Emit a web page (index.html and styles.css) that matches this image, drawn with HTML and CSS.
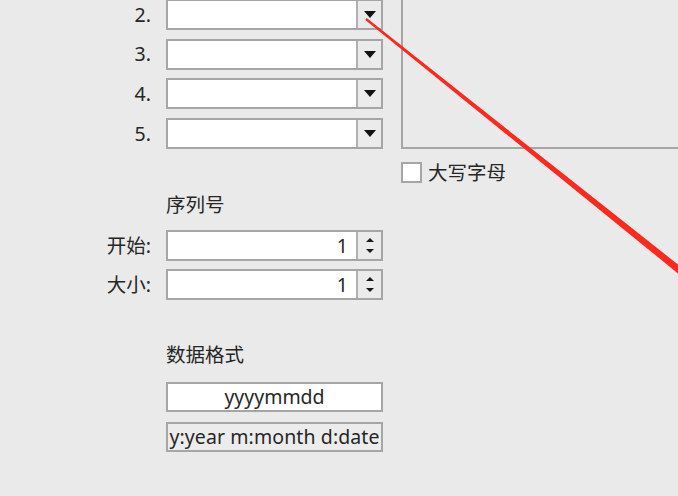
FILE: index.html
```html
<!DOCTYPE html>
<html lang="zh">
<head>
<meta charset="utf-8">
<link rel="stylesheet" href="styles.css">
</head>
<body>
<div class="page">
  <div class="left">
    <div class="combos">
      <span class="lbl">2.</span>
      <div class="combo"><div class="field"></div><div class="drop"><span class="tri-down"></span></div></div>
      <span class="lbl">3.</span>
      <div class="combo"><div class="field"></div><div class="drop"><span class="tri-down"></span></div></div>
      <span class="lbl">4.</span>
      <div class="combo"><div class="field"></div><div class="drop"><span class="tri-down"></span></div></div>
      <span class="lbl">5.</span>
      <div class="combo"><div class="field"></div><div class="drop"><span class="tri-down"></span></div></div>
    </div>

    <div class="title title-seq">序列号</div>
    <div class="spins">
      <span class="lbl">开始:</span>
      <div class="combo"><div class="field num">1</div><div class="spin"><span class="s-up"></span><span class="s-down"></span></div></div>
      <span class="lbl">大小:</span>
      <div class="combo"><div class="field num">1</div><div class="spin"><span class="s-up"></span><span class="s-down"></span></div></div>
    </div>

    <div class="title title-fmt">数据格式</div>
    <div class="fmt">
      <div class="box white">yyyymmdd</div>
      <div class="box gray">y:year m:month d:date</div>
    </div>
  </div>

  <div class="right">
    <div class="panel"></div>
    <label class="check"><span class="cb"></span><span>大写字母</span></label>
  </div>
</div>

<svg class="arrow" width="678" height="496" viewBox="0 0 678 496">
  <polygon points="365.3,19.9 366.7,18.1 702.3,283.8 697.7,289.4" fill="#fb2a1f"/>
</svg>
</body>
</html>
```

FILE: styles.css
```css
html, body {
  margin: 0;
  padding: 0;
  background: #eaeaea;
  width: 678px;
  height: 496px;
  overflow: hidden;
}
body {
  position: relative;
  font-family: "Noto Sans", "Noto Sans CJK SC", sans-serif;
  font-size: 19.5px;
  color: #262626;
}
.page {
  display: flex;
  margin-top: -1px;
}
.left {
  width: 383px;
  flex: none;
}
.combos, .spins {
  display: grid;
  grid-template-columns: 151px 217px;
  column-gap: 15px;
  align-items: center;
}
.combos {
  row-gap: 8.7px;
}
.spins {
  row-gap: 8px;
  margin-top: 15px;
}
.lbl {
  text-align: right;
  line-height: 20px;
}
.combo {
  height: 31px;
  box-sizing: border-box;
  border: 2px solid #a6a6a6;
  display: flex;
  background: #fff;
}
.field {
  flex: 1;
  background: #fff;
}
.field.num {
  text-align: right;
  padding-right: 8px;
  line-height: 27px;
}
.drop, .spin {
  width: 23px;
  border-left: 2px solid #b0b0b0;
  background: #ebebeb;
  display: flex;
  flex-direction: column;
  align-items: center;
  justify-content: center;
}
.tri-down {
  width: 0;
  height: 0;
  border-left: 6.5px solid transparent;
  border-right: 6.5px solid transparent;
  border-top: 7px solid #111;
}
.spin {
  gap: 7px;
}
.s-up {
  width: 0;
  height: 0;
  border-left: 4.5px solid transparent;
  border-right: 4.5px solid transparent;
  border-bottom: 4.5px solid #1a1a1a;
}
.s-down {
  width: 0;
  height: 0;
  border-left: 4.5px solid transparent;
  border-right: 4.5px solid transparent;
  border-top: 4.5px solid #1a1a1a;
}
.title {
  margin-left: 166px;
  line-height: 20px;
}
.title-seq {
  margin-top: 46px;
}
.title-fmt {
  margin-top: 45px;
}
.fmt {
  margin-left: 166px;
  width: 217px;
  margin-top: 17px;
  display: flex;
  flex-direction: column;
  gap: 10px;
}
.box {
  height: 30px;
  box-sizing: border-box;
  border: 2px solid #a6a6a6;
  text-align: center;
  line-height: 26px;
  white-space: nowrap;
  overflow: hidden;
}
.box.white {
  background: #fff;
}
.box.gray {
  background: #ececec;
  letter-spacing: 0.1px;
}
.right {
  padding-left: 18px;
  flex: 1;
}
.panel {
  width: 300px;
  height: 150px;
  box-sizing: border-box;
  border: 2px solid #a6a6a6;
  border-top: none;
  border-right: none;
}
.check {
  display: flex;
  align-items: center;
  gap: 6px;
  margin-top: 13px;
  line-height: 20px;
}
.cb {
  width: 21px;
  height: 21px;
  box-sizing: border-box;
  border: 2px solid #a6a6a6;
  background: #fff;
}
.arrow {
  position: absolute;
  left: 0;
  top: 0;
  pointer-events: none;
}
```
